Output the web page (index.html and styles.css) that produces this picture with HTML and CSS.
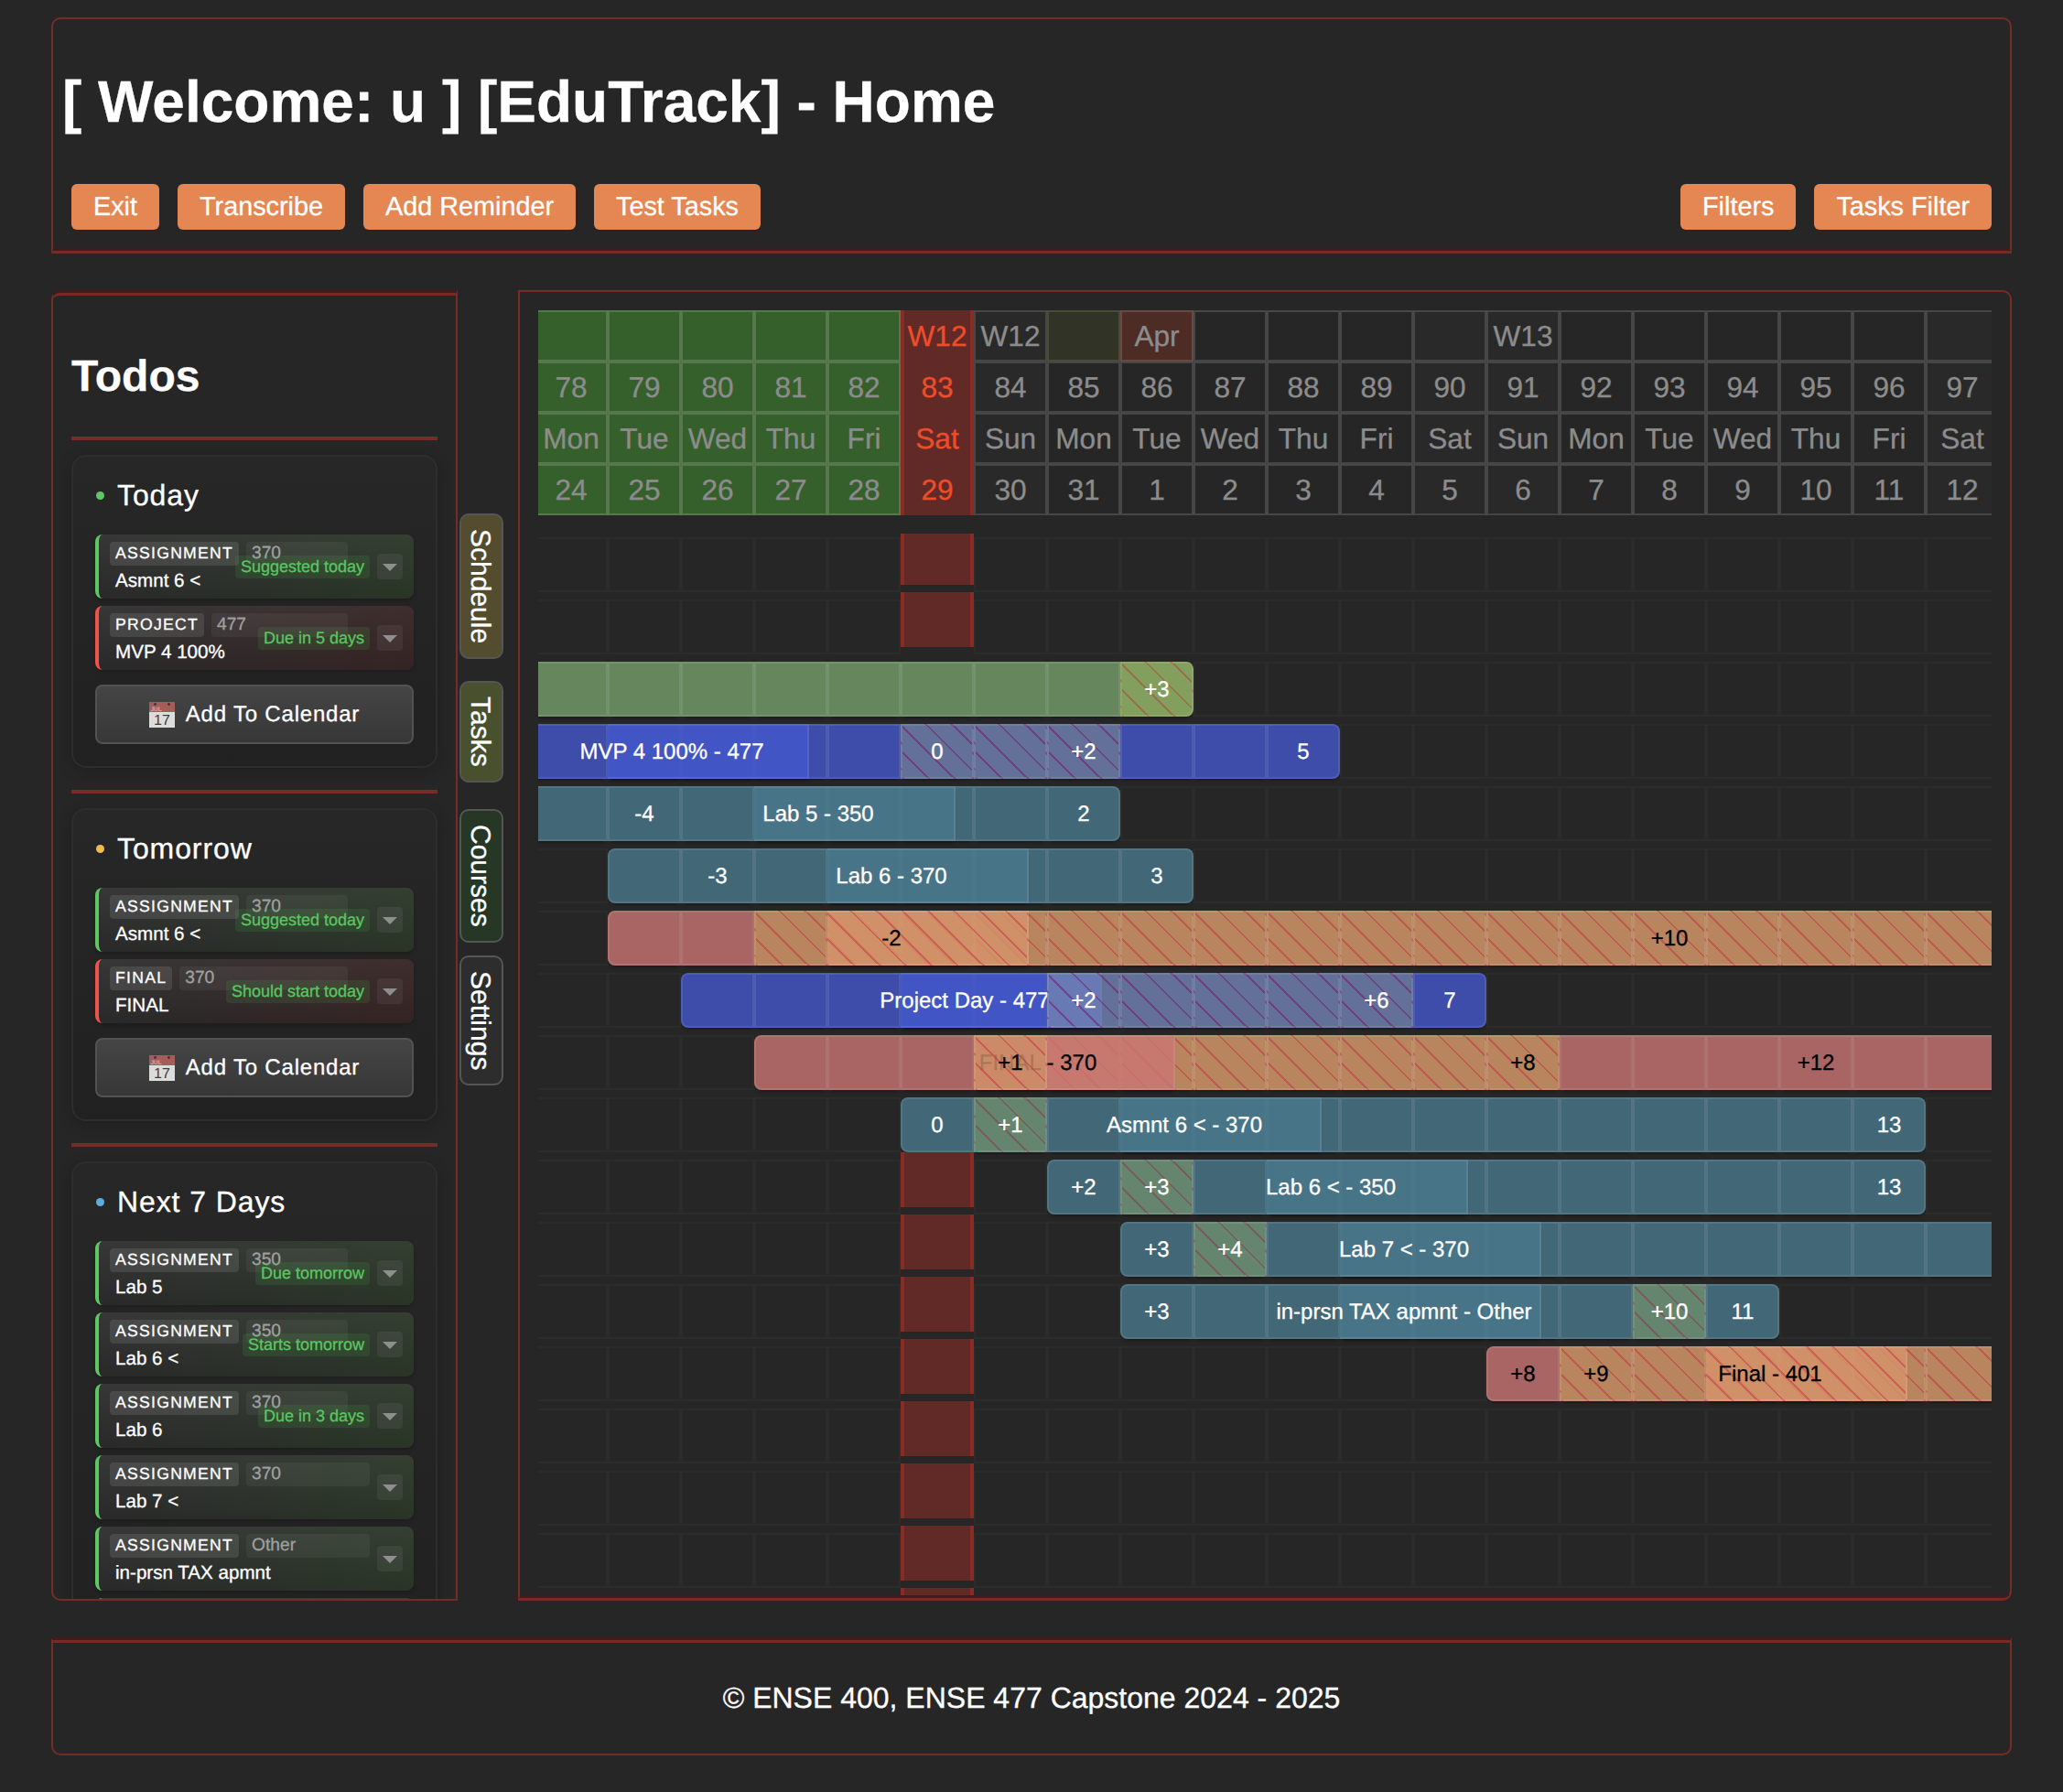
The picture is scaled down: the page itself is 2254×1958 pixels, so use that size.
FILE: index.html
```html
<!DOCTYPE html>
<html lang="en">
<head>
<meta charset="utf-8">
<title>EduTrack - Home</title>
<link rel="stylesheet" href="styles.css">
</head>
<body>
<header class="header">
  <h1 class="title">[ Welcome: u ] [EduTrack] - Home</h1>
  <nav class="toolbar">
    <button class="btn">Exit</button>
    <button class="btn">Transcribe</button>
    <button class="btn">Add Reminder</button>
    <button class="btn">Test Tasks</button>
    <span class="spacer"></span>
    <button class="btn">Filters</button>
    <button class="btn">Tasks Filter</button>
  </nav>
</header>

<main class="main">
  <aside class="todos">
    <h2 class="todos-title">Todos</h2>

    <hr class="rule">
    <section class="card">
      <h3 class="card-title"><i class="dot dot-green"></i>Today</h3>
      <div class="items">
        <div class="item ok">
          <div class="info"><div class="meta short"><span class="type">ASSIGNMENT</span><span class="course">370</span></div><div class="name">Asmnt 6 &lt;</div></div>
          <span class="status">Suggested today</span><span class="caret"></span>
        </div>
        <div class="item due">
          <div class="info"><div class="meta short"><span class="type">PROJECT</span><span class="course">477</span></div><div class="name">MVP 4 100%</div></div>
          <span class="status">Due in 5 days</span><span class="caret"></span>
        </div>
      </div>
      <button class="add">
        <svg class="add-icon" viewBox="0 0 28 28">
          <rect width="28" height="28" fill="#dcdcdc"/>
          <rect width="28" height="11" fill="#a55d5b"/>
          <circle cx="6.5" cy="2.5" r="1.4" fill="#4a3131"/>
          <circle cx="21.5" cy="2.5" r="1.4" fill="#4a3131"/>
          <text class="icon-month" x="1.5" y="10">JUL</text>
          <text class="icon-day" x="14" y="24.5">17</text>
        </svg>Add To Calendar
      </button>
    </section>

    <hr class="rule">
    <section class="card">
      <h3 class="card-title"><i class="dot dot-amber"></i>Tomorrow</h3>
      <div class="items">
        <div class="item ok">
          <div class="info"><div class="meta short"><span class="type">ASSIGNMENT</span><span class="course">370</span></div><div class="name">Asmnt 6 &lt;</div></div>
          <span class="status">Suggested today</span><span class="caret"></span>
        </div>
        <div class="item due">
          <div class="info"><div class="meta short"><span class="type">FINAL</span><span class="course">370</span></div><div class="name">FINAL</div></div>
          <span class="status">Should start today</span><span class="caret"></span>
        </div>
      </div>
      <button class="add">
        <svg class="add-icon" viewBox="0 0 28 28">
          <rect width="28" height="28" fill="#dcdcdc"/>
          <rect width="28" height="11" fill="#a55d5b"/>
          <circle cx="6.5" cy="2.5" r="1.4" fill="#4a3131"/>
          <circle cx="21.5" cy="2.5" r="1.4" fill="#4a3131"/>
          <text class="icon-month" x="1.5" y="10">JUL</text>
          <text class="icon-day" x="14" y="24.5">17</text>
        </svg>Add To Calendar
      </button>
    </section>

    <hr class="rule">
    <section class="card">
      <h3 class="card-title"><i class="dot dot-blue"></i>Next 7 Days</h3>
      <div class="items">
        <div class="item ok">
          <div class="info"><div class="meta short"><span class="type">ASSIGNMENT</span><span class="course">350</span></div><div class="name">Lab 5</div></div>
          <span class="status">Due tomorrow</span><span class="caret"></span>
        </div>
        <div class="item ok">
          <div class="info"><div class="meta short"><span class="type">ASSIGNMENT</span><span class="course">350</span></div><div class="name">Lab 6 &lt;</div></div>
          <span class="status">Starts tomorrow</span><span class="caret"></span>
        </div>
        <div class="item ok">
          <div class="info"><div class="meta short"><span class="type">ASSIGNMENT</span><span class="course">370</span></div><div class="name">Lab 6</div></div>
          <span class="status">Due in 3 days</span><span class="caret"></span>
        </div>
        <div class="item ok">
          <div class="info"><div class="meta"><span class="type">ASSIGNMENT</span><span class="course">370</span></div><div class="name">Lab 7 &lt;</div></div>
          <span class="caret"></span>
        </div>
        <div class="item ok">
          <div class="info"><div class="meta"><span class="type">ASSIGNMENT</span><span class="course">Other</span></div><div class="name">in-prsn TAX apmnt</div></div>
          <span class="caret"></span>
        </div>
        <div class="item ok"></div>
      </div>
    </section>
  </aside>

  <nav class="tabs">
    <span class="tab tab-schedule">Schdeule</span>
    <span class="tab tab-tasks">Tasks</span>
    <span class="tab tab-courses">Courses</span>
    <span class="tab tab-settings">Settings</span>
  </nav>

  <section class="gantt">
    <div class="calendar" id="calendar-head"></div>
    <div class="chart" id="chart"></div>
  </section>
</main>

<footer class="footer">© ENSE 400, ENSE 477 Capstone 2024 - 2025</footer>
<script src="main.js"></script>
</body>
</html>
```
FILE: styles.css
```css
* { box-sizing: border-box; }

:root { --frame: rgba(167, 49, 41, .62); }

body {
  margin: 0;
  padding: 19px 56px 40px;
  background: #262626;
  color: #fff;
  font-family: "Liberation Sans", Arial, sans-serif;
  font-kerning: normal;
  text-rendering: geometricPrecision;
  -webkit-text-stroke: .3px;
  display: flex;
  flex-direction: column;
  gap: 40px;
}

button {
  font-family: inherit;
  color: inherit;
  text-rendering: inherit;
}

/* ---------- header ---------- */
.header {
  height: 258px;
  border: 2px solid var(--frame);
  border-bottom: 6px groove var(--frame);
  border-radius: 10px 10px 0 0;
  padding: 54px 20px 20px 10px;
}
.title { margin: 0; font-size: 64px; line-height: 73px; }
.toolbar { display: flex; gap: 20px; margin: 53px 0 0 10px; }
.btn {
  height: 50px;
  padding: 9px 24px 8px;
  border: 0;
  border-radius: 6px;
  background: #e48752;
  font-size: 28.8px;
  line-height: 33px;
  white-space: nowrap;
}
.spacer { flex: 1; }

/* ---------- todos ---------- */
.main { display: flex; height: 1432px; }
.todos {
  width: 444px;
  border: 2px solid var(--frame);
  border-top: 6px groove var(--frame);
  border-radius: 10px 0 0 10px;
  padding: 20px;
  overflow: hidden;
}
.todos-title { margin: 42px 0 38px; font-size: 48px; line-height: 54px; }
.rule { margin: 0 0 16px; border: 0; height: 4px; background: #762d28; }
.card {
  margin-bottom: 24px;
  padding: 24px;
  border: 2px solid #2d2d2d;
  border-radius: 16px;
  background: linear-gradient(#272727, #212121);
  box-shadow: 0 4px 16px rgba(0, 0, 0, .2);
}
.card-title {
  display: flex;
  align-items: center;
  margin: 0 0 24px;
  font-size: 32px;
  line-height: 37px;
  font-weight: normal;
  letter-spacing: .9px;
}
.dot { width: 9px; height: 9px; margin: 0 14px 1px 1px; border-radius: 50%; }
.dot-green { background: #5ec764; }
.dot-amber { background: #f3ba4f; }
.dot-blue { background: #5aaee0; }

.items { display: flex; flex-direction: column; gap: 8px; }
.item {
  position: relative;
  display: flex;
  align-items: center;
  gap: 8px;
  height: 70px;
  padding: 0 12px;
  border-left: 4px solid;
  border-radius: 8px;
  box-shadow: 0 2px 4px rgba(0, 0, 0, .2);
}
.ok {
  border-left-color: #5ec764;
  background: linear-gradient(100deg, rgba(40, 90, 30, 0) 5%, rgba(40, 90, 30, .24)), linear-gradient(#373737, #292929);
}
.due {
  border-left-color: #ee544d;
  background: linear-gradient(100deg, rgba(110, 25, 25, 0) 5%, rgba(90, 15, 15, .24)), linear-gradient(#373737, #292929);
}
.info { flex: 1; display: flex; flex-direction: column; gap: 4px; }
.meta { display: flex; gap: 8px; height: 26px; }
.short { margin-right: 24px; }
.type, .course { padding: 0 6px; border-radius: 4px; line-height: 24px; }
.type { background: rgba(255, 255, 255, .1); font-size: 17.6px; letter-spacing: 1.27px; }
.course { flex: 1; background: rgba(255, 255, 255, .05); color: #a0a0a0; font-size: 19.2px; line-height: 26px; }
.name { height: 24px; padding-left: 6px; font-size: 20.6px; line-height: 26px; }
/* the status chip lies over the end of the meta row */
.status {
  position: absolute;
  right: 48px;
  padding: 0 6px;
  border-radius: 4px;
  background: rgba(76, 195, 80, .13);
  color: #5ac660;
  font-size: 18px;
  line-height: 25px;
}
.caret {
  display: flex;
  align-items: center;
  justify-content: center;
  width: 28px;
  height: 28px;
  border-radius: 4px;
  background: rgba(255, 255, 255, .06);
}
.caret::before {
  content: "";
  margin-top: 2px;
  border: 8px solid transparent;
  border-top-color: #8e8e8e;
  border-bottom: 0;
}
.add {
  display: flex;
  align-items: center;
  justify-content: center;
  gap: 12px;
  width: 100%;
  height: 65px;
  margin-top: 16px;
  padding: 1px 0 0;
  border: 2px solid #525252;
  border-radius: 8px;
  background: linear-gradient(#454545, #373737);
  font-size: 24px;
  letter-spacing: .8px;
}
.add-icon { width: 28px; height: 28px; letter-spacing: 0; }
.icon-month { font-size: 6.5px; font-weight: bold; fill: #d3aaa9; }
.icon-day { font-size: 16px; fill: #3c3c3c; text-anchor: middle; }

/* ---------- side tabs ---------- */
.tabs {
  width: 66px;
  padding: 244px 0 0 2px;
  display: flex;
  flex-direction: column;
  align-items: flex-start;
}
.tab {
  width: 48px;
  padding: 15px 0;
  border: 2px solid #555;
  border-radius: 10px;
  font-size: 30px;
  line-height: 41px;
  writing-mode: vertical-rl;
  padding-right: 3px;
}
.tab-schedule { height: 159px; margin-bottom: 24px; background: #544c2f; }
.tab-tasks { height: 111px; margin-bottom: 29px; background: #49502e; }
.tab-courses { height: 146px; margin-bottom: 14px; background: #273726; }
.tab-settings { height: 142px; background: #2d2d2d; }

/* ---------- gantt ---------- */
.gantt {
  flex: 1;
  min-width: 0;
  border: 2px solid var(--frame);
  border-bottom: 6px groove var(--frame);
  border-radius: 0 10px 10px 0;
  padding: 20px 20px 0;
  display: flex;
  flex-direction: column;
  gap: 20px;
}
.calendar, .chart { overflow: hidden; }
.calendar-row, .row {
  display: grid;
  grid-template-columns: repeat(20, 80px);
  width: 1600px;
  margin-left: -4px;
}
.calendar-row { height: 56px; }
.day {
  display: flex;
  align-items: center;
  justify-content: center;
  border: 2px solid #464646;
  color: #8c8c8c;
  font-size: 31.6px;
}
.weekend { background: #292929; }
.past { background: #36602b; border-color: #57774d; }
.month-end { background: #303325; border-color: #484d3a; }
.month-start { background: #4d2c26; border-color: #694a42; }
.now {
  background: #612a27;
  border: 0 solid #8a2a24;
  border-width: 0 4px;
  color: #ee4d29;
}

.chart { flex: 1; padding-top: 4px; display: flex; flex-direction: column; gap: 8px; }
.row { height: 60px; flex: none; }
.cell {
  grid-row: 1;
  height: 60px;
  padding-top: 1px;
  display: flex;
  align-items: center;
  justify-content: center;
  border: 2px solid #2b2b2b;
  font-size: 24px;
  white-space: nowrap;
}
.row .now { border-color: #8a2a24; border-width: 0 4px; transform: translateY(-8px); }

.task {
  border-color: rgba(255, 255, 255, .09);
  background-color: var(--fill);
  box-shadow: 0 4px 4px -3px rgba(0, 0, 0, .4);
}
.green { --fill: rgba(119, 160, 109, .8); }
.blue { --fill: rgba(68, 87, 203, .8); }
.teal { --fill: rgba(74, 120, 140, .8); }
.red { --fill: rgba(203, 118, 115, .8); color: #000; }
.lime { --fill: rgba(155, 190, 108, .8); --stripe: rgba(185, 40, 55, .38); }
.slate { --fill: rgba(115, 132, 183, .8); --stripe: rgba(125, 5, 98, .45); }
.sage { --fill: rgba(118, 158, 129, .8); --stripe: rgba(150, 30, 80, .4); }
.orange { --fill: rgba(222, 157, 110, .8); --stripe: rgba(200, 30, 60, .42); color: #000; }
.lime, .slate, .sage, .orange {
  background-image: repeating-linear-gradient(45deg, transparent 0 18px, var(--stripe) 18px 20px);
}
.first { border-radius: 8px 0 0 8px; }
.last { border-radius: 0 8px 8px 0; }
.label { z-index: 1; width: 220px; padding-right: 78px; border-left: 0; }
.raised { z-index: 2; }
.orange.label, .orange.raised { --fill: rgba(214, 147, 106, .8); }

/* ---------- footer ---------- */
.footer {
  height: 129px;
  display: flex;
  align-items: center;
  justify-content: center;
  border: 2px solid var(--frame);
  border-top: 6px groove var(--frame);
  border-radius: 0 0 10px 10px;
  font-size: 32px;
}
```
FILE: main.js
```javascript
const DAYS = 20;
const TODAY = 5;
const NAMES = ['Mon', 'Tue', 'Wed', 'Thu', 'Fri', 'Sat', 'Sun'];
const NOTES = { 5: 'W12', 6: 'W12', 8: 'Apr', 13: 'W13' };

function add(parent, className, text) {
  const el = document.createElement('div');
  el.className = className;
  if (text !== undefined) el.textContent = text;
  parent.appendChild(el);
  return el;
}

/* calendar header: week or month note, day of term, weekday, date */
const head = document.getElementById('calendar-head');
[
  i => NOTES[i] || '',
  i => 78 + i,
  i => NAMES[i % 7],
  i => (i < 8 ? 24 + i : i - 7),
].forEach((value, line) => {
  const row = add(head, 'calendar-row');
  for (let i = 0; i < DAYS; i++) {
    let kind = i % 7 > 4 ? ' weekend' : '';
    if (i < TODAY) kind = ' past';
    if (line === 0 && i === 7) kind = ' month-end';
    if (line === 0 && i === 8) kind = ' month-start';
    if (i === TODAY) kind = ' now';
    add(row, 'day' + kind, value(i));
  }
});

/* spans: [colour, first day, last day]; marks: text by day;
   label: [day, text, colour]; raised: the day whose cell lies over the label */
const TASKS = [
  null,
  null,
  { spans: [['green', 0, 7], ['lime', 8, 8]], marks: { 8: '+3' } },
  { spans: [['blue', 0, 4], ['slate', 5, 7], ['blue', 8, 10]], marks: { 5: '0', 7: '+2', 10: '5' }, label: [1, 'MVP 4 100% - 477', 'blue'] },
  { spans: [['teal', 0, 7]], marks: { 1: '-4', 7: '2' }, label: [3, 'Lab 5 - 350', 'teal'] },
  { spans: [['teal', 1, 8]], marks: { 2: '-3', 8: '3' }, label: [4, 'Lab 6 - 370', 'teal'] },
  { spans: [['red', 1, 2], ['orange', 3, 19]], marks: { 15: '+10' }, label: [4, '-2', 'orange'] },
  { spans: [['blue', 2, 6], ['slate', 7, 11], ['blue', 12, 12]], marks: { 7: '+2', 11: '+6', 12: '7' }, label: [5, 'Project Day - 477', 'blue'], raised: 7 },
  { spans: [['red', 3, 5], ['orange', 6, 13], ['red', 14, 19]], marks: { 6: '+1', 13: '+8', 17: '+12' }, label: [6, 'FINAL - 370', 'red'], raised: 6 },
  { spans: [['teal', 5, 5], ['sage', 6, 6], ['teal', 7, 18]], marks: { 5: '0', 6: '+1', 18: '13' }, label: [8, 'Asmnt 6 < - 370', 'teal'] },
  { spans: [['teal', 7, 7], ['sage', 8, 8], ['teal', 9, 18]], marks: { 7: '+2', 8: '+3', 18: '13' }, label: [10, 'Lab 6 < - 350', 'teal'] },
  { spans: [['teal', 8, 8], ['sage', 9, 9], ['teal', 10, 19]], marks: { 8: '+3', 9: '+4' }, label: [11, 'Lab 7 < - 370', 'teal'] },
  { spans: [['teal', 8, 14], ['sage', 15, 15], ['teal', 16, 16]], marks: { 8: '+3', 15: '+10', 16: '11' }, label: [11, 'in-prsn TAX apmnt - Other', 'teal'] },
  { spans: [['red', 13, 13], ['orange', 14, 19]], marks: { 13: '+8', 14: '+9' }, label: [16, 'Final - 401', 'orange'] },
  null,
  null,
  null,
  null,
];

const chart = document.getElementById('chart');
TASKS.forEach(task => {
  const row = add(chart, 'row');
  const colours = [];
  (task ? task.spans : []).forEach(([colour, from, to]) => {
    for (let i = from; i <= to; i++) colours[i] = colour;
  });
  for (let i = 0; i < DAYS; i++) {
    let kind = i === TODAY ? ' now' : '';
    if (colours[i]) {
      kind = ' task ' + colours[i];
      if (i > 0 && !colours[i - 1]) kind += ' first';
      if (i < DAYS - 1 && !colours[i + 1]) kind += ' last';
      if (task.raised === i) kind += ' raised';
    }
    const cell = add(row, 'cell' + kind, task && task.marks[i] || '');
    cell.style.gridColumn = i + 1;
  }
  if (task && task.label) {
    const label = add(row, 'cell task label ' + task.label[2], task.label[1]);
    label.style.gridColumn = task.label[0] + 1;
  }
});
```
